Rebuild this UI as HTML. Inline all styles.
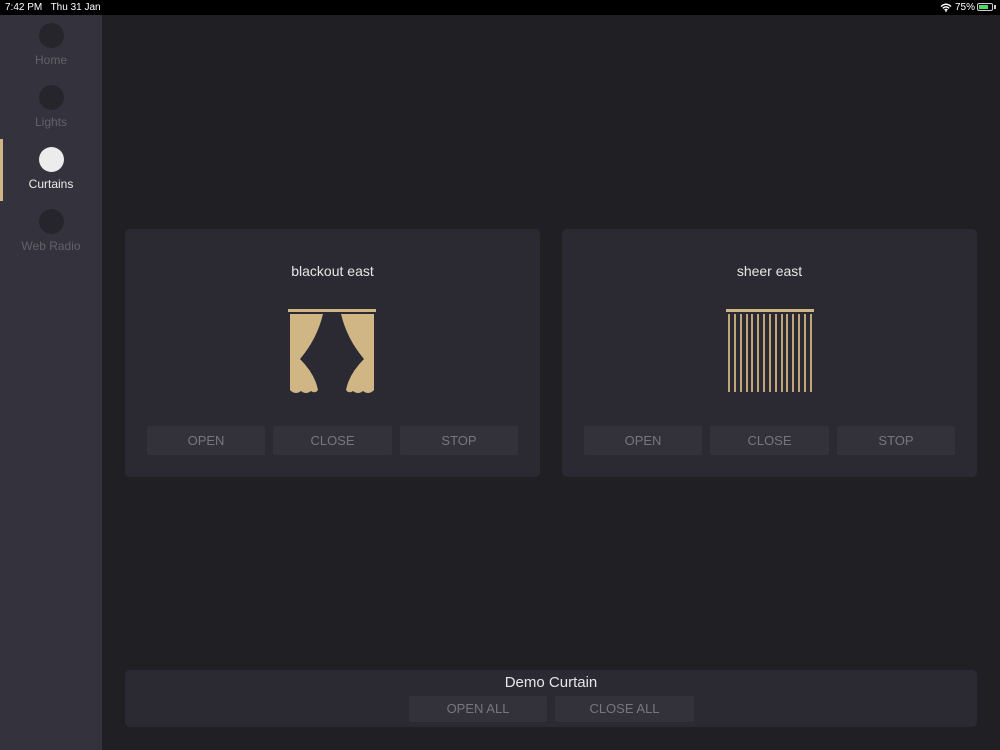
<!DOCTYPE html>
<html><head><style>
*{margin:0;padding:0;box-sizing:border-box}
body{width:1000px;height:750px;background:#201f24;font-family:"Liberation Sans",sans-serif;position:relative;overflow:hidden}
.status{position:absolute;left:0;top:0;width:1000px;height:15px;background:#000;color:#fff;font-size:10px;line-height:15px}
.side{position:absolute;left:0;top:15px;width:102px;height:735px;background:#34333d}
.nav{position:absolute;left:0;width:102px;text-align:center;font-size:12px;color:#62616a}
.nav .c{width:25px;height:25px;border-radius:50%;background:#26252b;margin:0 auto 5px}
.card{position:absolute;background:#2b2a33;border-radius:5px}
.title{position:absolute;width:100%;text-align:center;color:#e6e6e6;font-size:14px}
.btn{position:absolute;background:#33323b;color:#77767e;font-size:13px;text-align:center;border-radius:2px}
</style></head><body>
<div class="status"><span style="position:absolute;left:5px">7:42 PM&nbsp;&nbsp;&nbsp;Thu 31 Jan</span><span style="position:absolute;left:955px">75%</span>
<svg style="position:absolute;left:940px;top:3px" width="12" height="9" viewBox="0 0 12 9"><path d="M1 3.5Q6 -1 11 3.5M2.8 5.3Q6 2.5 9.2 5.3M4.6 7Q6 5.8 7.4 7" stroke="#fff" stroke-width="1.4" fill="none"/><circle cx="6" cy="8" r="0.9" fill="#fff"/></svg>
<div style="position:absolute;left:977px;top:3px;width:16px;height:8px;border:1px solid #ccc;border-radius:2px;padding:1px"><div style="width:75%;height:100%;background:#4cd964"></div></div><div style="position:absolute;left:994px;top:5px;width:2px;height:4px;background:#ccc"></div></div>
<div class="side">
<div class="nav" style="top:8px"><div class="c"></div>Home</div>
<div class="nav" style="top:70px"><div class="c"></div>Lights</div>
<div class="nav" style="top:132px;color:#ececec"><div class="c" style="background:#ececec"></div>Curtains</div>
<div style="position:absolute;left:0;top:124px;width:3px;height:62px;background:#d1b685"></div>
<div class="nav" style="top:194px"><div class="c"></div>Web Radio</div>
</div>
<div class="card" style="left:125px;top:229px;width:415px;height:248px">
<div class="title" style="top:34px">blackout east</div>
<svg style="position:absolute;left:0;top:0" width="415" height="248">
<rect x="163" y="80" width="88" height="3" fill="#d1b685"/>
<path d="M165 85H198Q192 110 175 130Q190 145 193 161Q190 165 186 162Q181 166 176 162Q171 166 166 162L165 161Z" fill="#d1b685"/>
<path d="M249 85H216Q222 110 239 130Q224 145 221 161Q224 165 228 162Q233 166 238 162Q243 166 248 162L249 161Z" fill="#d1b685"/>
</svg>
<div class="btn" style="left:22px;top:197px;width:118px;height:29px;line-height:29px">OPEN</div>
<div class="btn" style="left:148px;top:197px;width:119px;height:29px;line-height:29px">CLOSE</div>
<div class="btn" style="left:275px;top:197px;width:118px;height:29px;line-height:29px">STOP</div>
</div>
<div class="card" style="left:562px;top:229px;width:415px;height:248px">
<div class="title" style="top:34px">sheer east</div>
<svg style="position:absolute;left:0;top:0" width="415" height="248">
<rect x="164" y="80" width="88" height="3" fill="#d1b685"/>
<g fill="#bfa67a">
<rect x="166" y="85" width="2" height="78"/><rect x="172" y="85" width="2" height="78"/><rect x="178" y="85" width="2" height="78"/><rect x="184" y="85" width="2" height="78"/><rect x="189" y="85" width="2" height="78"/><rect x="195" y="85" width="2" height="78"/><rect x="201" y="85" width="2" height="78"/><rect x="207" y="85" width="2" height="78"/><rect x="213" y="85" width="2" height="78"/><rect x="219" y="85" width="2" height="78"/><rect x="224" y="85" width="2" height="78"/><rect x="230" y="85" width="2" height="78"/><rect x="236" y="85" width="2" height="78"/><rect x="242" y="85" width="2" height="78"/><rect x="248" y="85" width="2" height="78"/>
</g></svg>
<div class="btn" style="left:22px;top:197px;width:118px;height:29px;line-height:29px">OPEN</div>
<div class="btn" style="left:148px;top:197px;width:119px;height:29px;line-height:29px">CLOSE</div>
<div class="btn" style="left:275px;top:197px;width:118px;height:29px;line-height:29px">STOP</div>
</div>
<div class="card" style="left:125px;top:670px;width:852px;height:57px">
<div class="title" style="top:4px;font-size:15px">Demo Curtain</div>
<div class="btn" style="left:284px;top:26px;width:138px;height:26px;line-height:26px">OPEN ALL</div>
<div class="btn" style="left:430px;top:26px;width:139px;height:26px;line-height:26px">CLOSE ALL</div>
</div>
</body></html>
